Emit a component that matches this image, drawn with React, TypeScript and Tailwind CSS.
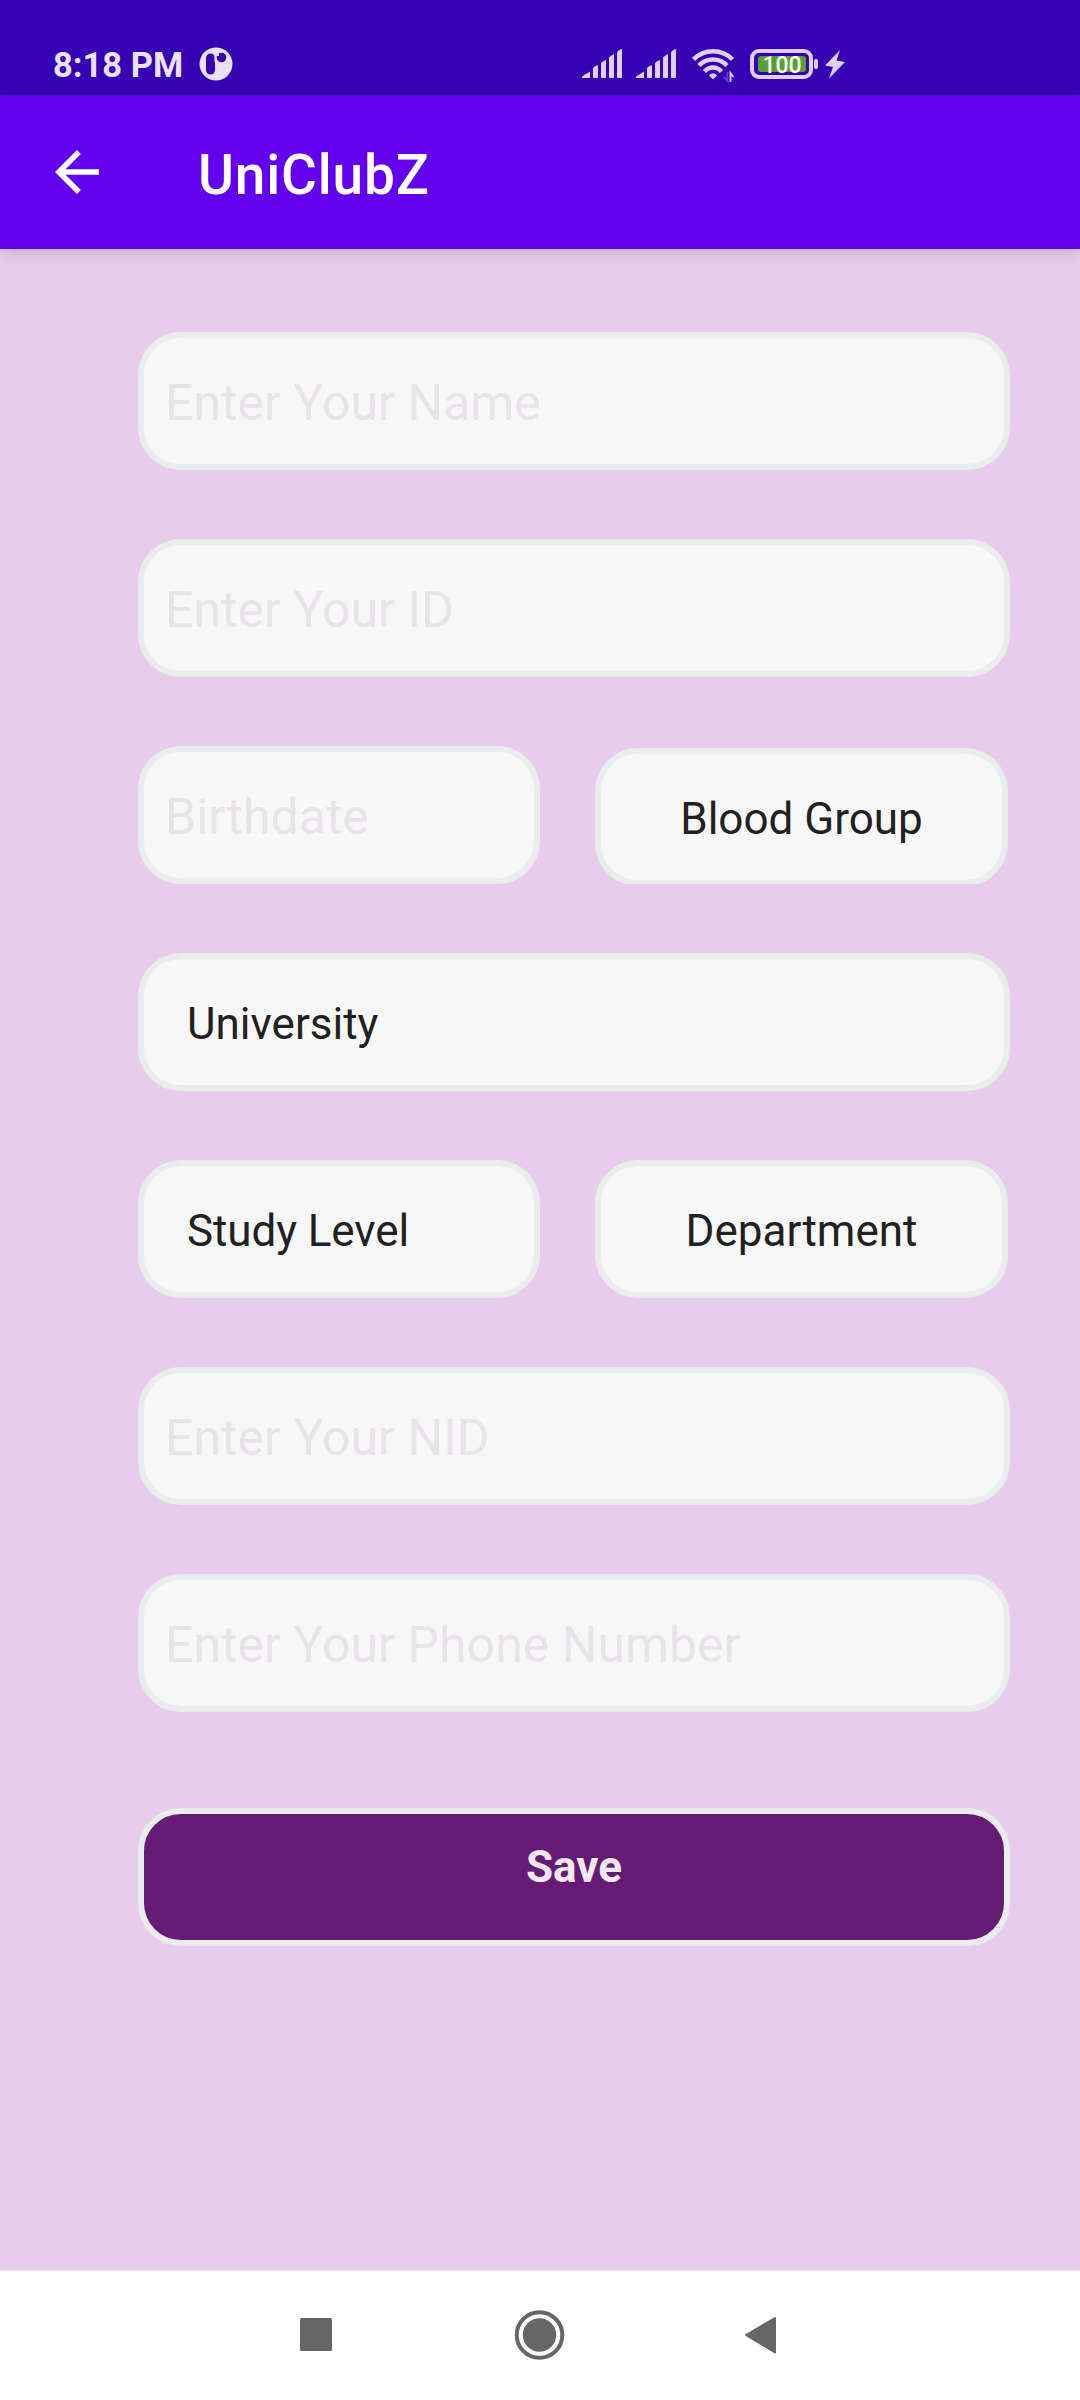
import React from "react";

const base =
  "box-border flex h-[138px] items-center rounded-[43px] border-6 border-[#e9edeb] bg-[#f7f7f7]";

function Field({ placeholder, className = "w-[872px]" }: { placeholder: string; className?: string }) {
  return (
    <div className={`${base} ${className}`}>
      <input
        placeholder={placeholder}
        className="mt-[4px] w-full bg-transparent pl-[21px] text-[50px] leading-[58px] tracking-[0.03px] text-[#212121] outline-none placeholder:text-[#e9e2ea]"
      />
    </div>
  );
}

function Picker({ label, className }: { label: string; className: string }) {
  return (
    <button className={`${base} pt-[4px] text-[44px] leading-[52px] text-[#212121] ${className}`}>{label}</button>
  );
}

function Signal() {
  return (
    <svg width="41" height="30" viewBox="0 0 41 30" fill="#ddd0f7">
      <path d="M0 29V27.500L8 22.500V29z" />
      <path d="M11 29V19Q12 17.500 16 16V29z" />
      <path d="M19 29V14Q20 12.500 24 11V29z" />
      <path d="M27 29V8.500Q28 7 32 5V29z" />
      <path d="M35 29V3.500Q36 1 40 0V29z" />
    </svg>
  );
}

function StatusBar() {
  return (
    <div className="flex h-[95px] items-start bg-[#3700b3]">
      <div className="ml-[53px] mt-[45px] w-[146px] whitespace-nowrap text-[34.5px] font-bold leading-[40px] text-[#e9e2f8]">
        8:18 PM
      </div>
      <svg className="mt-[47px]" width="34" height="34" viewBox="0 0 34 34">
        <circle cx="17" cy="17" r="16.500" fill="#e9e2f8" />
        <rect x="7" y="6.500" width="9" height="21" rx="4.500" fill="#3700b3" />
        <circle cx="22.500" cy="10.500" r="4.800" fill="#3700b3" />
        <path d="M15.500 7H20V9H17Q16.500 10 17 15H15.500z" fill="#e9e2f8" />
      </svg>
      <div className="ml-[349px] mt-[49px] flex">
        <Signal />
        <div className="w-[13px]" />
        <Signal />
        <svg className="ml-[15px]" width="44" height="34" viewBox="0 0 44 34" fill="none" stroke="#ddd0f7">
          <path d="M1.500 10.500Q9.500 2.300 21 2.300T40.500 10.500" strokeWidth="4.600" />
          <path d="M7 16.500Q12.500 10.500 21 10.500T35 16.500" strokeWidth="4.600" />
          <path d="M12.500 22.500Q16 18.500 21 18.500T29.500 22.500" strokeWidth="4.400" />
          <path d="M17 26.500Q21 22 25 26.500L21 30.500z" fill="#ddd0f7" stroke="none" />
          <path d="M38.500 33V24L41.500 28" strokeWidth="1.800" />
          <path d="M35.500 23V32L32 28" stroke="#6741c8" strokeWidth="1.800" />
        </svg>
        <div className="relative ml-[14px] flex h-[30px] w-[63px] items-center justify-center rounded-[9px] border-4 border-[#ddd0f7]">
          <div className="flex h-[16px] w-[48px] items-center justify-center rounded-[3px] bg-[#55a233] text-[23px] font-medium leading-none text-white">
            <span className="ml-px mt-[3px]">100</span>
          </div>
        </div>
        <div className="ml-[1px] mt-[10px] h-[10px] w-[4px] rounded-[2px] bg-[#ddd0f7]" />
        <svg className="ml-[7px]" width="20" height="30" viewBox="0 0 20 30" fill="#ddd0f7">
          <path d="M15 1L0 16.500L8 18L4 29.500L20 13L11.500 11.500z" />
        </svg>
      </div>
    </div>
  );
}

function AppBar() {
  return (
    <div className="flex h-[154px] items-center bg-[#6200ee] shadow-[0_2px_14px_rgba(0,0,0,0.2)]">
      <svg className="ml-[55px] -mt-px" width="44" height="44" viewBox="4 4 16 16" fill="white">
        <path d="M20 11H7.830l5.590-5.590L12 4l-8 8 8 8 1.410-1.410L7.830 13H20v-2z" />
      </svg>
      <h1 className="ml-[99px] mt-[5px] text-[55px] font-medium leading-[64px] tracking-[0.8px] text-white">
        UniClubZ
      </h1>
    </div>
  );
}

export default function App() {
  return (
    <div className="flex h-[2400px] w-[1080px] flex-col overflow-hidden bg-[#e7cceb] font-['Roboto',sans-serif]">
      <StatusBar />
      <AppBar />
      <form className="flex flex-1 flex-col gap-[69px] pl-[138px] pt-[83px]">
        <Field placeholder="Enter Your Name" />
        <Field placeholder="Enter Your ID" />
        <div className="flex h-[138px] gap-[55px] overflow-hidden">
          <Field placeholder="Birthdate" className="w-[402px]" />
          <Picker label="Blood Group" className="mt-[2px] w-[413px] justify-center" />
        </div>
        <Picker label="University" className="w-[872px] pl-[43px]" />
        <div className="flex h-[138px] gap-[55px]">
          <Picker label="Study Level" className="w-[402px] pl-[43px] tracking-[-0.1px]" />
          <Picker label="Department" className="w-[413px] justify-center" />
        </div>
        <Field placeholder="Enter Your NID" />
        <Field placeholder="Enter Your Phone Number" />
        <button className="mt-[27px] box-border flex h-[138px] w-[872px] items-start justify-center rounded-[43px] border-6 border-[#e9edeb] bg-[#651b75] pt-[27px] text-[44px] font-bold leading-[52px] text-[#f4e8ef]">
          Save
        </button>
      </form>
      <div className="flex h-[130px] items-start border-t border-[#eee4ef] bg-white pl-[300px] pt-[42px]">
        <svg className="-mt-[3px]" width="480" height="52" viewBox="0 0 480 52" fill="#666">
          <rect x="0" y="8" width="32" height="33" rx="1.500" />
          <circle cx="239.500" cy="25" r="22.800" fill="none" stroke="#666" strokeWidth="4" />
          <circle cx="239.500" cy="25" r="16.700" />
          <path d="M446 25L475 8V42.500z" stroke="#666" strokeWidth="2" strokeLinejoin="round" />
        </svg>
      </div>
    </div>
  );
}
